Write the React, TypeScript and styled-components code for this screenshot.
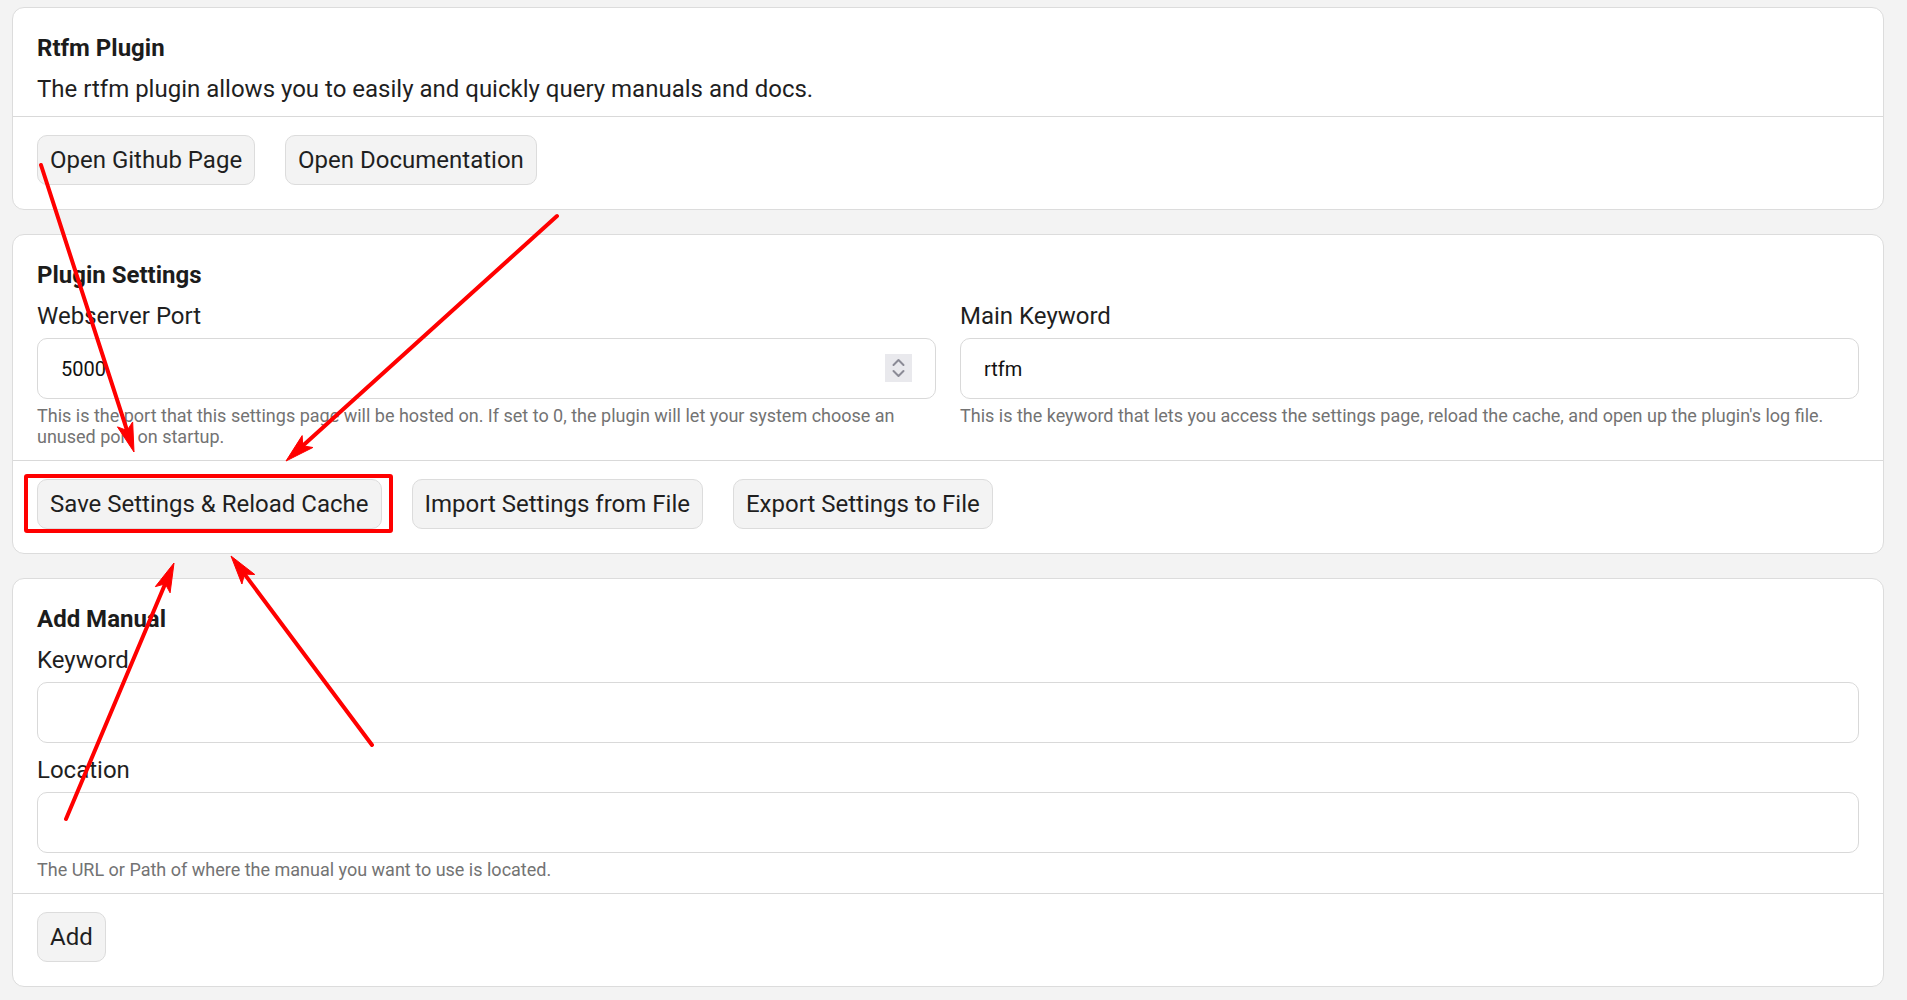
import React from 'react'
import styled, { createGlobalStyle } from 'styled-components'

const GlobalStyle = createGlobalStyle`
  html, body {
    margin: 0;
    padding: 0;
    background: #f3f3f3;
  }
  body {
    font-family: Roboto, "Liberation Sans", Arial, sans-serif;
    color: #1f1f1f;
  }
  * {
    box-sizing: border-box;
  }
`

const Page = styled.div`
  position: relative;
  display: flex;
  flex-direction: column;
  gap: 24px;
  padding: 7px 23px 13px 12px;
  min-height: 1000px;
`

const Card = styled.section`
  background: #fff;
  border: 1px solid #dcdcdc;
  border-radius: 12px;
`

const Body = styled.div`
  display: flex;
  flex-direction: column;
  gap: 13px;
  padding: 26px 24px 13px;
`

const Title = styled.h2`
  margin: 0;
  font-size: 24px;
  line-height: 28px;
  font-weight: 700;
  color: #1c1c1c;
`

const Text = styled.p`
  margin: 0;
  font-size: 24px;
  line-height: 28px;
`

const Footer = styled.div`
  display: flex;
  gap: 30px;
  padding: 18px 24px 24px;
  border-top: 1px solid #d9d9d9;
`

const Button = styled.button<{ $marked?: boolean }>`
  position: relative;
  height: 50px;
  padding: 0 12px;
  font-family: inherit;
  font-size: 24px;
  color: #1f1f1f;
  background: #f3f3f3;
  border: 1px solid #dcdcdc;
  border-radius: 10px;

  &::after {
    content: '';
    display: ${p => (p.$marked ? 'block' : 'none')};
    position: absolute;
    top: -6px;
    left: -14px;
    right: -12px;
    bottom: -5px;
    border: 4px solid #f00;
    border-radius: 3px;
  }
`

const Columns = styled.div`
  display: grid;
  grid-template-columns: 1fr 1fr;
  gap: 24px;
`

const Field = styled.div`
  display: flex;
  flex-direction: column;
`

const Label = styled.label`
  font-size: 24px;
  line-height: 28px;
  margin-bottom: 8px;
`

const InputWrap = styled.div`
  position: relative;
`

const Input = styled.input`
  display: block;
  width: 100%;
  height: 61px;
  padding: 0 23px;
  border: 1px solid #d9d9d9;
  border-radius: 10px;
  font-family: inherit;
  font-size: 20px;
  color: #111;
  background: #fff;
  outline: none;
`

const Spinner = styled.span`
  position: absolute;
  top: 16px;
  right: 24px;
  width: 27px;
  height: 28px;
  background: #e9e9ed;
  display: flex;
  align-items: center;
  justify-content: center;
`

const Hint = styled.div`
  margin-top: 6px;
  font-size: 18px;
  line-height: 21px;
  color: #737373;
`

const Overlay = styled.svg`
  position: absolute;
  top: 0;
  left: 0;
  pointer-events: none;
`

type ArrowProps = { x1: number; y1: number; x2: number; y2: number }

const Arrow = ({ x1, y1, x2, y2 }: ArrowProps) => {
  const len = Math.hypot(x2 - x1, y2 - y1)
  const ux = (x2 - x1) / len
  const uy = (y2 - y1) / len
  const nx = -uy
  const ny = ux
  const L = 29
  const W = 8
  const bx = x2 - ux * L
  const by = y2 - uy * L
  const mx = x2 - ux * L * 0.78
  const my = y2 - uy * L * 0.78
  const pts = [
    [x2, y2],
    [bx + nx * W, by + ny * W],
    [mx, my],
    [bx - nx * W, by - ny * W],
  ]
    .map(p => p.join(','))
    .join(' ')
  return (
    <g>
      <line x1={x1} y1={y1} x2={mx} y2={my} stroke="#f00" strokeWidth={4} strokeLinecap="round" />
      <polygon points={pts} fill="#f00" stroke="#f00" strokeWidth={1} strokeLinejoin="round" />
    </g>
  )
}

const arrows: ArrowProps[] = [
  { x1: 41, y1: 165, x2: 134, y2: 452 },
  { x1: 557, y1: 216, x2: 286, y2: 461 },
  { x1: 66, y1: 819, x2: 174, y2: 563 },
  { x1: 372, y1: 745, x2: 231, y2: 556 },
]

const SpinIcon = () => (
  <svg width="13" height="20" viewBox="0 0 13 20" fill="none">
    <path d="M1.5 7 L6.5 2 L11.5 7" stroke="#8b8b96" strokeWidth="2" strokeLinecap="round" strokeLinejoin="round" />
    <path d="M1.5 13 L6.5 18 L11.5 13" stroke="#8b8b96" strokeWidth="2" strokeLinecap="round" strokeLinejoin="round" />
  </svg>
)

export default function App() {
  return (
    <>
      <GlobalStyle />
      <Page>
        <Card>
          <Body>
            <Title>Rtfm Plugin</Title>
            <Text>The rtfm plugin allows you to easily and quickly query manuals and docs.</Text>
          </Body>
          <Footer>
            <Button>Open Github Page</Button>
            <Button>Open Documentation</Button>
          </Footer>
        </Card>

        <Card>
          <Body>
            <Title>Plugin Settings</Title>
            <Columns>
              <Field>
                <Label>Webserver Port</Label>
                <InputWrap>
                  <Input type="text" defaultValue="5000" />
                  <Spinner>
                    <SpinIcon />
                  </Spinner>
                </InputWrap>
                <Hint>
                  This is the port that this settings page will be hosted on. If set to 0, the plugin will
                  let your system choose an unused port on startup.
                </Hint>
              </Field>
              <Field>
                <Label>Main Keyword</Label>
                <InputWrap>
                  <Input type="text" defaultValue="rtfm" />
                </InputWrap>
                <Hint>
                  This is the keyword that lets you access the settings page, reload the cache, and open up
                  the plugin's log file.
                </Hint>
              </Field>
            </Columns>
          </Body>
          <Footer>
            <Button $marked>Save Settings &amp; Reload Cache</Button>
            <Button>Import Settings from File</Button>
            <Button>Export Settings to File</Button>
          </Footer>
        </Card>

        <Card>
          <Body>
            <Title>Add Manual</Title>
            <Field>
              <Label>Keyword</Label>
              <InputWrap>
                <Input type="text" />
              </InputWrap>
            </Field>
            <Field>
              <Label>Location</Label>
              <InputWrap>
                <Input type="text" />
              </InputWrap>
              <Hint>The URL or Path of where the manual you want to use is located.</Hint>
            </Field>
          </Body>
          <Footer>
            <Button>Add</Button>
          </Footer>
        </Card>

        <Overlay width="1907" height="1000" viewBox="0 0 1907 1000">
          {arrows.map((a, i) => (
            <Arrow key={i} {...a} />
          ))}
        </Overlay>
      </Page>
    </>
  )
}
